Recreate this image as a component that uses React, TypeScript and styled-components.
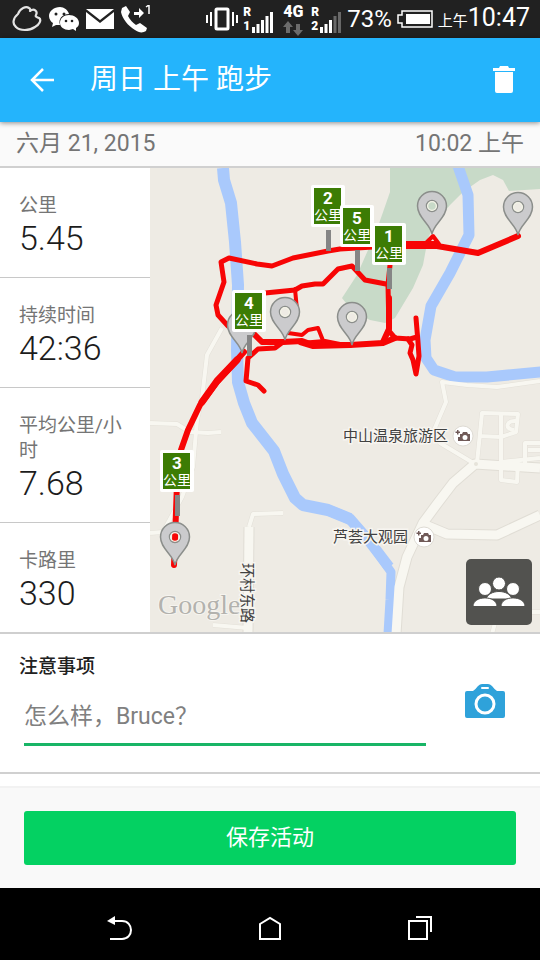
import React from 'react';
import styled, { createGlobalStyle } from 'styled-components';

const GlobalStyle = createGlobalStyle`
  *, *::before, *::after { box-sizing: border-box; }
  body {
    margin: 0;
    background: #fff;
    font-family: Roboto, "Noto Sans CJK SC", sans-serif;
  }
  button, input { font-family: inherit; }
  svg { display: block; flex: none; }
`;

const Page = styled.div`
  display: flex;
  flex-direction: column;
  min-height: 100vh;
`;

const StatusBar = styled.div`
  display: flex;
  align-items: center;
  justify-content: space-between;
  height: 38px;
  padding: 0 10px 0 12px;
  background: #212121;
  color: #fff;
`;

const StatusGroup = styled.div<{ $gap: number }>`
  display: flex;
  align-items: center;
  gap: ${(p) => p.$gap}px;
`;

const Signal = styled.div`
  display: flex;
  align-items: flex-end;
  gap: 1px;
`;

const SignalTag = styled.span`
  display: flex;
  flex-direction: column;
  font-size: 12px;
  line-height: 14px;
  font-weight: 900;
`;

const Network = styled.div`
  display: flex;
  flex-direction: column;
  align-items: center;
  margin: 0 3px 0 4px;
  font-size: 16px;
  line-height: 18px;
  font-weight: 900;
`;

const Percent = styled.span`
  font-size: 24px;
  line-height: 30px;
`;

const Clock = styled.span`
  font-size: 25px;
  line-height: 30px;
  white-space: nowrap;
  small { font-size: 15px; }
`;

const AppBar = styled.header`
  z-index: 1;
  display: flex;
  align-items: center;
  height: 84px;
  padding: 0 16px 0 22px;
  background: #24b4fc;
  color: #fff;
  box-shadow: 0 1px 5px rgba(0, 0, 0, 0.45);
`;

const IconButton = styled.button`
  display: grid;
  place-items: center;
  width: 40px;
  height: 40px;
  padding: 0;
  border: 0;
  background: none;
  color: inherit;
`;

const Title = styled.h1`
  flex: 1;
  margin: 0;
  padding-left: 28px;
  font-size: 28px;
  line-height: 36px;
  font-weight: 400;
`;

const DateRow = styled.div`
  display: flex;
  align-items: center;
  justify-content: space-between;
  height: 46px;
  padding: 0 16px;
  background: #fafafa;
  border-bottom: 2px solid #d0d0d0;
  color: #757575;
  font-size: 23px;
  line-height: 30px;
`;

const Summary = styled.section`
  display: grid;
  grid-template-columns: 150px 1fr;
  border-bottom: 2px solid #cfcfcf;
`;

const Stats = styled.dl`
  margin: 0;
`;

const Stat = styled.div`
  padding: 25px 20px 19px 19px;
  border-bottom: 1px solid #c8c8c8;
  &:last-child { border-bottom: 0; }
`;

const StatLabel = styled.dt`
  color: #757575;
  font-size: 19px;
  line-height: 25px;
`;

const StatValue = styled.dd`
  margin: 0;
  color: #1c1c1c;
  font-size: 34px;
  line-height: 40px;
  font-weight: 300;
`;

const MapPanel = styled.div`
  position: relative;
  min-height: 464px;
  background: #eeebe4;
  overflow: hidden;
`;

const MapDrawing = styled.svg`
  position: absolute;
  inset: 0;
  width: 100%;
  height: 100%;
`;

const GroupButton = styled.button`
  position: absolute;
  right: 8px;
  bottom: 7px;
  display: grid;
  place-items: center;
  width: 66px;
  height: 66px;
  padding: 0;
  border: 0;
  border-radius: 5px;
  background: #52524f;
`;

const Notes = styled.section`
  display: grid;
  grid-template-columns: 1fr 40px;
  align-items: center;
  column-gap: 39px;
  height: 140px;
  padding: 16px 35px 14px 19px;
  border-bottom: 2px solid #d0d0d0;
`;

const NotesField = styled.div`
  display: flex;
  flex-direction: column;
`;

const NotesLabel = styled.label`
  color: #212121;
  font-size: 19px;
  line-height: 30px;
  font-weight: 500;
`;

const NotesInput = styled.input`
  min-width: 0;
  height: 54px;
  margin: 10px 0 10px 5px;
  padding: 0 0 2px;
  border: 0;
  border-bottom: 3px solid #18b566;
  border-radius: 0;
  background: none;
  font-size: 23px;
  outline: none;
  &::placeholder { color: #808080; opacity: 1; }
`;

const PhotoButton = styled(IconButton)`
  margin-bottom: 6px;
`;

const Footer = styled.footer`
  flex: 1;
  margin-top: 12px;
  padding: 23px 24px 22px;
  border-top: 2px solid #f2f2f2;
  background: #f9f9f9;
`;

const SaveButton = styled.button`
  display: block;
  width: 100%;
  height: 54px;
  padding: 0;
  border: 0;
  border-radius: 3px;
  background: #04d162;
  color: #fff;
  font-size: 22px;
  line-height: 30px;
`;

const NavBar = styled.nav`
  display: flex;
  align-items: center;
  justify-content: center;
  gap: 110px;
  height: 72px;
  padding-top: 8px;
  background: #000;
  color: #fff;
`;

const MapText = styled.text`
  fill: #414141;
  stroke: #f7f5f0;
  stroke-width: 3px;
  paint-order: stroke;
  font-size: 15px;
`;

const Watermark = styled.text`
  fill: #b3b2ae;
  stroke: #f6f4ef;
  stroke-width: 2px;
  paint-order: stroke;
  font-family: "Liberation Serif", serif;
  font-size: 28px;
`;

const FlagNumber = styled.text`
  fill: #fff;
  font-family: Roboto, sans-serif;
  font-size: 17px;
  font-weight: 700;
  text-anchor: middle;
`;

const FlagUnit = styled.text`
  fill: #fff;
  font-size: 14px;
  text-anchor: middle;
`;

const stats = [
  { label: '公里', value: '5.45' },
  { label: '持续时间', value: '42:36' },
  { label: '平均公里/小时', value: '7.68' },
  { label: '卡路里', value: '330' },
];

const majorRoads = [
  'M540 468L475 464L453 483L437 504L423 523L407 557L399 587L396 634',
  'M423 524L447 534L497 535L540 515',
  'M249 527L248 634',
];

const minorRoads = [
  'M475 464L440 443L434 430L446 402L442 382L467 385L497 387L540 381',
  'M477 463L482 413L518 414L516 432L501 437L478 436',
  'M501 413V480L517 482L518 460M501 462L540 458',
  'M540 443H525V463M540 450H528M517 421C506 420 504 429 514 430',
  'M222 328L207 355L202 398L197 420L193 467L182 497L163 532L150 533',
  'M150 423L177 424L190 432L208 433L221 432',
  'M283 513L253 514L249 527',
  'M213 625L248 628',
  'M540 612H498L492 634',
];

const rivers = [
  { d: 'M223 168L224 180L231 203L235 242L238 285L237 350L238 382L244 403L252 423L274 451L283 474L295 498L303 505L328 510L350 519', width: 12 },
  { d: 'M328 510L350 519L370 542L389 567', width: 11 },
  { d: 'M370 542L391 572L390 600L388 634', width: 9 },
  { d: 'M458 166L468 195L469 235L450 273L431 306L425 340L426 358L434 370L455 377L487 377L541 372', width: 11 },
];

const tracks = [
  { d: 'M407 245L340 249L328 251L293 258L272 266L257 264L229 258L221 262L224 282L216 305L218 315L228 326', width: 5 },
  { d: 'M395 246L437 246L478 253L518 236', width: 6 },
  { d: 'M402 245L435 245', width: 8 },
  { d: 'M425 244L433 236L439 244', width: 4 },
  { d: 'M255 294L295 290L302 286L315 284L323 284L338 269L352 266L365 280L386 284', width: 5 },
  { d: 'M295 289L297 310', width: 4 },
  { d: 'M390 265L388 285L389 331L395 338L410 339L417 337', width: 5 },
  { d: 'M389 298V329L383 342', width: 6 },
  { d: 'M416 318L418 342L419 356L416 374L413 360L410 353L412 345L408 339', width: 5 },
  { d: 'M255 335L262 342L283 342L302 341L313 345L350 345L383 343L395 338', width: 6 },
  { d: 'M300 343L325 341L350 346L313 347Z', width: 4 },
  { d: 'M283 342L275 348L258 349L248 358L246 381L258 385L264 391', width: 5 },
  { d: 'M288 333L302 335L308 330L318 328L324 343', width: 4 },
  { d: 'M244 352L217 382L200 405L188 430L181 450L177 483L175 540L174 565', width: 6 },
  { d: 'M237 360L217 381L202 402', width: 7 },
];

const pins = [
  { x: 432, y: 206 },
  { x: 518, y: 207 },
  { x: 242, y: 325 },
  { x: 285, y: 312 },
  { x: 352, y: 317 },
  { x: 175, y: 537 },
];

const flags = [
  { n: 2, x: 314, y: 188 },
  { n: 5, x: 343, y: 208 },
  { n: 1, x: 375, y: 226 },
  { n: 4, x: 235, y: 293 },
  { n: 3, x: 163, y: 453 },
];

const Pin = ({ x, y }: { x: number; y: number }) => (
  <g transform={`translate(${x} ${y})`}>
    <path
      fillRule="evenodd"
      d="M0 28C-2 17 -14.500 12 -14.500 0A14.500 14.500 0 1 1 14.500 0C14.500 12 2 17 0 28ZM5.500 0A5.500 5.500 0 1 0 -5.500 0A5.500 5.500 0 1 0 5.500 0Z"
      fill="#cbcbcd"
      stroke="#8b8e8b"
      strokeWidth="1.500"
    />
    <circle r="4.400" fill="none" stroke="#f3f3e6" strokeWidth="1.300" />
  </g>
);

const Flag = ({ n, x, y }: { n: number; x: number; y: number }) => (
  <g transform={`translate(${x} ${y})`}>
    <rect x="12" y="42" width="5" height="21" fill="#858585" />
    <rect x="-3" y="-3" width="34" height="42" rx="2" fill="#fff" />
    <rect width="27" height="36" fill="#3c7c04" />
    <FlagNumber x="14" y="16">{n}</FlagNumber>
    <FlagUnit x="14" y="32">公里</FlagUnit>
  </g>
);

const Poi = ({ x, y }: { x: number; y: number }) => (
  <g transform={`translate(${x} ${y})`}>
    <circle r="10" fill="#fff" stroke="#dedbd4" strokeWidth="1" />
    <path
      fillRule="evenodd"
      d="M-3 -2H-1L0 -4H4L5 -2H7V5H-5V1H-3ZM4.500 1.500A2.500 2.500 0 1 0 -0.500 1.500A2.500 2.500 0 1 0 4.500 1.500ZM-6 -6H-4.500V-4.500H-3V-3H-4.500V-1.500H-6V-3H-7.500V-4.500H-6Z"
      fill="#705a58"
    />
  </g>
);

const RouteMap = () => (
  <MapDrawing viewBox="150 168 390 464" preserveAspectRatio="xMidYMid slice" role="img" aria-label="路线图">
    <path
      d="M390 168V192L382 215L376 232L357 275L342 298L353 312L370 320L385 323L395 318L413 288L423 265L428 238L436 222L450 205L463 192L480 180L493 175L503 180L509 191L540 189V168Z"
      fill="#c8dac8"
    />
    <g fill="none" strokeLinejoin="round">
      {majorRoads.map((d) => <path key={d} d={d} stroke="#e0ddd5" strokeWidth="11" />)}
      {minorRoads.map((d) => <path key={d} d={d} stroke="#e3e0d8" strokeWidth="5" />)}
      {rivers.map((r) => <path key={r.d} d={r.d} stroke="#a9c9fc" strokeWidth={r.width} />)}
      {minorRoads.map((d) => <path key={d} d={d} stroke="#f8f7f1" strokeWidth="4" />)}
      {majorRoads.map((d) => <path key={d} d={d} stroke="#f8f7f1" strokeWidth="9" />)}
    </g>
    <circle cx="476" cy="464" r="2" fill="#e6e3da" />
    <g fill="none" stroke="#f70505" strokeLinejoin="round" strokeLinecap="round">
      {tracks.map((t) => <path key={t.d} d={t.d} strokeWidth={t.width} />)}
    </g>
    <MapText x="343" y="441">中山温泉旅游区</MapText>
    <MapText x="333" y="542">芦荟大观园</MapText>
    <Poi x={463} y={436} />
    <Poi x={424} y={537} />
    <Watermark x="158" y="614">Google</Watermark>
    <MapText transform="translate(242 563) rotate(90)">环村东路</MapText>
    {pins.map((p) => <Pin key={`${p.x}-${p.y}`} {...p} />)}
    {flags.map((f) => <Flag key={f.n} {...f} />)}
  </MapDrawing>
);

const CloudIcon = () => (
  <svg width="30" height="26" viewBox="0 0 30 26" fill="none" stroke="#e4e4e4" strokeWidth="2.200" strokeLinejoin="round">
    <path d="M6 8C8 2 14 0 17 2Q19 3 18 5C22 2 26 5 24 9C23 11 25 11 27 12C30 14 27 19 23 21C17 25 8 25 4 21C0 18 1 12 6 8Z" />
  </svg>
);

const WeChatIcon = () => (
  <svg width="30" height="26" viewBox="0 0 30 26" fill="#fff">
    <path d="M11 1C5 1 0 5 0 10C0 13 2 16 4 17L3 21L7 19L11 19C9 13 13 8 20 8C19 4 15 1 11 1Z" />
    <path d="M20 9C15 9 11 12 11 17C11 21 15 24 20 24L24 23L27 25V22C29 21 30 19 30 17C30 12 25 9 20 9Z" />
    <g fill="#212121">
      <circle cx="7" cy="8" r="1.500" /><circle cx="15" cy="8" r="1.500" />
      <circle cx="17" cy="15" r="1.300" /><circle cx="23" cy="15" r="1.300" />
    </g>
  </svg>
);

const MailIcon = () => (
  <svg width="28" height="20" viewBox="0 0 28 20" fill="#fff">
    <path d="M0 0H28L14 11ZM0 3L14 14L28 3V20H0Z" />
  </svg>
);

const CallIcon = () => (
  <svg width="30" height="28" viewBox="0 0 30 28" fill="#fff">
    <path d="M1 3L5 1L9 7L7 11C9 15 12 18 15 20L19 18L26 23L25 26C22 28 18 28 14 25C7 21 1 13 0 7Z" />
    <path d="M13 7H18V3L23 8L18 13V10H13Z" />
    <path d="M25 2L28 0V9" fill="none" stroke="#fff" strokeWidth="1.500" />
  </svg>
);

const VibrateIcon = () => (
  <svg width="32" height="24" viewBox="0 0 32 24" fill="none" stroke="#fff">
    <rect x="10" y="2" width="12" height="20" rx="1" strokeWidth="3" />
    <path d="M1 8V16M5 5V19M27 5V19M31 8V16" strokeWidth="2" />
  </svg>
);

const Bars = ({ active }: { active: number }) => (
  <svg width="22" height="22" viewBox="0 0 22 22">
    {[6, 9, 13, 17, 21].map((h, i) => (
      <rect key={h} x={i * 4.5} y={22 - h} width="3" height={h} fill={i < active ? '#fff' : '#686868'} />
    ))}
  </svg>
);

const DataArrows = () => (
  <svg width="20" height="15" viewBox="0 0 20 15" fill="#6b6b6b">
    <path d="M5 0L10 6H7V12H3V6H0ZM13 3H17V9H20L15 15L10 9H13Z" />
  </svg>
);

const BatteryIcon = () => (
  <svg width="36" height="18" viewBox="0 0 36 18">
    <path d="M5 1H35V17H5V13H1V5H5Z" fill="none" stroke="#fff" strokeWidth="1.500" />
    <rect x="9" y="4" width="24" height="10" fill="#fff" />
  </svg>
);

const BackArrow = () => (
  <svg width="26" height="24" viewBox="0 0 26 24" fill="none" stroke="#fff" strokeWidth="2.500">
    <path d="M14 1L3 12L14 23M3 12H25" />
  </svg>
);

const TrashIcon = () => (
  <svg width="22" height="28" viewBox="0 0 22 28" fill="#fff">
    <path d="M0 2H6L7 0H15L16 2H22V5H0ZM2 6H20V25Q20 27 18 27H4Q2 27 2 25Z" />
  </svg>
);

const PeopleIcon = () => (
  <svg width="52" height="30" viewBox="0 0 52 30" fill="#fff" stroke="#52524f" strokeWidth="1">
    <path d="M13 22C16 12 36 12 39 22Z" />
    <circle cx="26" cy="6.500" r="6.500" />
    <circle cx="12" cy="12" r="6.500" />
    <circle cx="40" cy="12" r="6.500" />
    <path d="M0 29.500C0 18 24 18 24 29.500ZM28 29.500C28 18 52 18 52 29.500Z" />
  </svg>
);

const CameraIcon = () => (
  <svg width="40" height="34" viewBox="0 0 40 34">
    <path d="M2 7H8Q10 6 13 2Q15 0 17 0H23Q25 0 27 2Q30 6 32 7H38Q40 7 40 9V32Q40 34 38 34H2Q0 34 0 32V9Q0 7 2 7Z" fill="#2fa2da" />
    <circle cx="20" cy="20" r="9" fill="none" stroke="#fff" strokeWidth="3" />
    <rect x="16" y="3" width="8" height="2" rx="1" fill="#fff" />
  </svg>
);

const NavBack = () => (
  <svg width="26" height="26" viewBox="0 0 26 26" fill="none" stroke="#fff" strokeWidth="2">
    <path d="M6 6H15C27 6 27 24 15 24H3" />
    <path d="M0 6L8 1V10Z" fill="#fff" stroke="none" />
  </svg>
);

const NavHome = () => (
  <svg width="22" height="24" viewBox="0 0 22 24" fill="none" stroke="#fff" strokeWidth="2">
    <path d="M1 8L11 2L21 8V23H1Z" />
  </svg>
);

const NavRecent = () => (
  <svg width="24" height="24" viewBox="0 0 24 24" fill="none" stroke="#fff" strokeWidth="2">
    <path d="M1 5H19V23H1ZM8 1H23V16" />
  </svg>
);

export default function App() {
  return (
    <Page>
      <GlobalStyle />
      <StatusBar>
        <StatusGroup $gap={7}>
          <CloudIcon />
          <WeChatIcon />
          <MailIcon />
          <CallIcon />
        </StatusGroup>
        <StatusGroup $gap={5}>
          <VibrateIcon />
          <Signal>
            <SignalTag><span>R</span><span>1</span></SignalTag>
            <Bars active={5} />
          </Signal>
          <Network>
            <span>4G</span>
            <DataArrows />
          </Network>
          <Signal>
            <SignalTag><span>R</span><span>2</span></SignalTag>
            <Bars active={3} />
          </Signal>
          <Percent>73%</Percent>
          <BatteryIcon />
          <Clock><small>上午</small>10:47</Clock>
        </StatusGroup>
      </StatusBar>
      <AppBar>
        <IconButton type="button" aria-label="返回"><BackArrow /></IconButton>
        <Title>周日 上午 跑步</Title>
        <IconButton type="button" aria-label="删除"><TrashIcon /></IconButton>
      </AppBar>
      <DateRow>
        <span>六月 21, 2015</span>
        <span>10:02 上午</span>
      </DateRow>
      <Summary>
        <Stats>
          {stats.map((s) => (
            <Stat key={s.label}>
              <StatLabel>{s.label}</StatLabel>
              <StatValue>{s.value}</StatValue>
            </Stat>
          ))}
        </Stats>
        <MapPanel>
          <RouteMap />
          <GroupButton type="button" aria-label="好友"><PeopleIcon /></GroupButton>
        </MapPanel>
      </Summary>
      <Notes>
        <NotesField>
          <NotesLabel htmlFor="notes">注意事项</NotesLabel>
          <NotesInput id="notes" type="text" placeholder="怎么样，Bruce？" />
        </NotesField>
        <PhotoButton type="button" aria-label="添加照片"><CameraIcon /></PhotoButton>
      </Notes>
      <Footer>
        <SaveButton type="button">保存活动</SaveButton>
      </Footer>
      <NavBar>
        <IconButton type="button" aria-label="后退"><NavBack /></IconButton>
        <IconButton type="button" aria-label="主屏幕"><NavHome /></IconButton>
        <IconButton type="button" aria-label="最近任务"><NavRecent /></IconButton>
      </NavBar>
    </Page>
  );
}
